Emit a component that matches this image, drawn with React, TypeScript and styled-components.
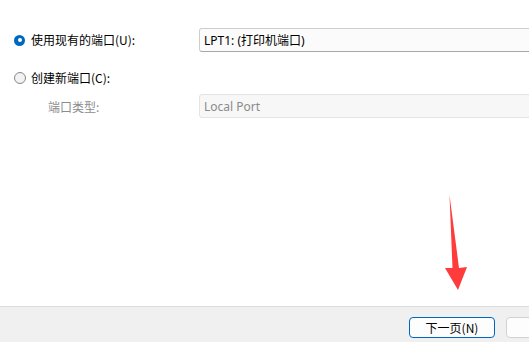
import React from "react";
import styled, { createGlobalStyle } from "styled-components";

const Global = createGlobalStyle`
  html, body { margin: 0; padding: 0; background: #ffffff; }
  body {
    font-family: "Segoe UI", "Noto Sans", "Noto Sans CJK SC", sans-serif;
    font-size: 12px;
    color: #000;
    overflow: hidden;
  }
`;

const Page = styled.div`
  position: relative;
  width: 529px;
  height: 347px;
  overflow: hidden;
  display: flex;
  flex-direction: column;
`;

const Content = styled.div`
  height: 306px;
  padding-top: 28px;
  box-sizing: border-box;
  display: flex;
  flex-direction: column;
`;

const Row = styled.div<{ $top?: number }>`
  display: grid;
  grid-template-columns: 185px 1fr;
  align-items: center;
  height: 24px;
  padding-left: 14px;
  margin-top: ${(p) => p.$top ?? 0}px;
  margin-right: -10px;
`;

const Option = styled.label`
  display: flex;
  align-items: center;
  gap: 6px;
  font-family: "Noto Sans CJK SC", sans-serif;
  font-size: 12px;
  line-height: 16px;
`;

const Radio = styled.span<{ $checked?: boolean }>`
  flex: none;
  width: ${(p) => (p.$checked ? 11 : 12)}px;
  height: ${(p) => (p.$checked ? 11 : 12)}px;
  margin-right: ${(p) => (p.$checked ? 0 : -1)}px;
  box-sizing: border-box;
  border-radius: 50%;
  display: flex;
  align-items: center;
  justify-content: center;
  background: ${(p) => (p.$checked ? "#0067c0" : "#f3f3f3")};
  border: ${(p) => (p.$checked ? "none" : "1px solid #878787")};
  &::after {
    content: "";
    display: ${(p) => (p.$checked ? "block" : "none")};
    width: 4px;
    height: 4px;
    border-radius: 50%;
    background: #fff;
  }
`;

const SubLabel = styled.span`
  padding-left: 34px;
  color: #8c8c8c;
  font-family: "Noto Sans CJK SC", sans-serif;
  font-size: 12px;
`;

const Field = styled.div<{ $disabled?: boolean }>`
  height: 24px;
  box-sizing: border-box;
  display: flex;
  align-items: center;
  padding-left: 4px;
  border-radius: 3px 0 0 3px;
  background: ${(p) => (p.$disabled ? "#f7f7f7" : "#fbfbfb")};
  border: 1px solid ${(p) => (p.$disabled ? "#e4e4e4" : "#cdcdcd")};
  border-bottom-color: ${(p) => (p.$disabled ? "#e4e4e4" : "#a8a8a8")};
  color: ${(p) => (p.$disabled ? "#8a8a8a" : "#000")};
  font-family: "Segoe UI", "Noto Sans", "Noto Sans CJK SC", sans-serif;
  font-size: 12px;
`;

const Separator = styled.div`
  height: 1px;
  background: #dcdcdc;
`;

const Footer = styled.div`
  height: 35px;
  background: #f0f0f0;
  display: flex;
  align-items: flex-start;
  padding: 10px 0 0 409px;
  gap: 11px;
  box-sizing: border-box;
`;

const Button = styled.button<{ $primary?: boolean }>`
  flex: none;
  width: 86px;
  height: 21px;
  padding: 0;
  box-sizing: border-box;
  border-radius: 4px;
  background: #fdfdfd;
  border: 1px solid ${(p) => (p.$primary ? "#0067c0" : "#d2d2d2")};
  font-family: "Noto Sans CJK SC", sans-serif;
  font-size: 12px;
  color: #000;
  display: flex;
  align-items: center;
  justify-content: center;
`;

const Arrow = styled.svg`
  position: absolute;
  left: 440px;
  top: 190px;
`;

export default function App() {
  return (
    <>
      <Global />
      <Page>
        <Content>
          <Row>
            <Option>
              <Radio $checked />
              使用现有的端口(U):
            </Option>
            <Field>LPT1: (打印机端口)</Field>
          </Row>
          <Row $top={14}>
            <Option>
              <Radio />
              创建新端口(C):
            </Option>
          </Row>
          <Row $top={4}>
            <SubLabel>端口类型:</SubLabel>
            <Field $disabled>Local Port</Field>
          </Row>
        </Content>
        <Separator />
        <Footer>
          <Button $primary>下一页(N)</Button>
          <Button />
        </Footer>
        <Arrow width="34" height="104" viewBox="0 0 34 104">
          <polygon
            points="9.5,5 19,78 27,77 18,100 5,78 12.5,78"
            fill="#ff3b3b"
          />
        </Arrow>
      </Page>
    </>
  );
}
